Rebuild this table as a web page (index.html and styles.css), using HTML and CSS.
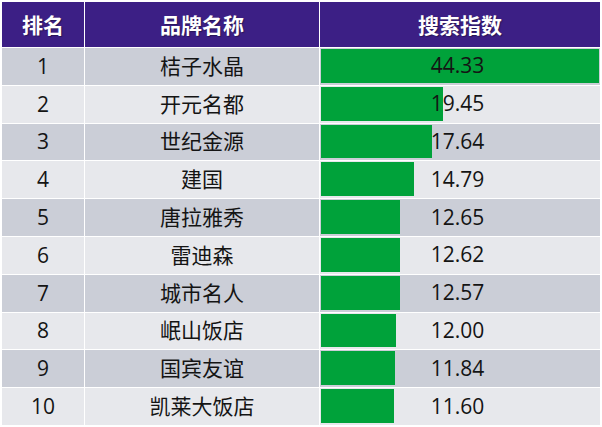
FILE: index.html
```html
<!DOCTYPE html>
<html lang="zh-CN">
<head>
<meta charset="utf-8">
<title>品牌搜索指数</title>
<link rel="stylesheet" href="styles.css">
</head>
<body>
<div class="board">
  <div class="head">排名</div>
  <div class="head">品牌名称</div>
  <div class="head">搜索指数</div>

  <div class="cell odd">1</div><div class="cell odd">桔子水晶</div>
  <div class="cell odd score"><div class="bar" style="width:278px"></div><span class="val">44.33</span></div>

  <div class="cell even">2</div><div class="cell even">开元名都</div>
  <div class="cell even score"><div class="bar" style="width:122px"></div><span class="val">19.45</span></div>

  <div class="cell odd">3</div><div class="cell odd">世纪金源</div>
  <div class="cell odd score"><div class="bar" style="width:110.6px"></div><span class="val">17.64</span></div>

  <div class="cell even">4</div><div class="cell even">建国</div>
  <div class="cell even score"><div class="bar" style="width:92.7px"></div><span class="val">14.79</span></div>

  <div class="cell odd">5</div><div class="cell odd">唐拉雅秀</div>
  <div class="cell odd score"><div class="bar" style="width:79.3px"></div><span class="val">12.65</span></div>

  <div class="cell even">6</div><div class="cell even">雷迪森</div>
  <div class="cell even score"><div class="bar" style="width:79.1px"></div><span class="val">12.62</span></div>

  <div class="cell odd">7</div><div class="cell odd">城市名人</div>
  <div class="cell odd score"><div class="bar" style="width:78.8px"></div><span class="val">12.57</span></div>

  <div class="cell even">8</div><div class="cell even">岷山饭店</div>
  <div class="cell even score"><div class="bar" style="width:75.3px"></div><span class="val">12.00</span></div>

  <div class="cell odd">9</div><div class="cell odd">国宾友谊</div>
  <div class="cell odd score"><div class="bar" style="width:74.2px"></div><span class="val">11.84</span></div>

  <div class="cell even">10</div><div class="cell even">凯莱大饭店</div>
  <div class="cell even score"><div class="bar" style="width:72.7px"></div><span class="val">11.60</span></div>
</div>
</body>
</html>
```
FILE: styles.css
```css
html, body {
  margin: 0;
  padding: 0;
  background: #ffffff;
}

body {
  font-family: "Open Sans", "Noto Sans CJK SC", sans-serif;
  font-size: 21px;
  color: #141414;
}

.board {
  display: grid;
  grid-template-columns: 82px 234px 280px;
  grid-template-rows: 45px repeat(10, 1fr);
  column-gap: 1px;
  row-gap: 1px;
  width: 598px;
  height: 423px;
  margin: 2px 0 0 2px;
}

.head {
  background: #3c1f85;
  color: #ffffff;
  font-weight: bold;
  font-family: "Noto Sans CJK SC", sans-serif;
  display: flex;
  align-items: center;
  justify-content: center;
  text-shadow: 1px 1px 1px rgba(0, 0, 0, 0.35);
  padding-bottom: 2px;
}

.cell {
  display: flex;
  align-items: center;
  justify-content: center;
  line-height: 1;
}

.odd {
  background: #cbced7;
}

.even {
  background: #e7e8ec;
}

.score {
  display: grid;
  grid-template: 1fr / 1fr;
  padding: 1px 0 2px 1px;
}

.bar {
  grid-area: 1 / 1;
  background: #00a23a;
  justify-self: start;
  align-self: stretch;
}

.val {
  grid-area: 1 / 1;
  align-self: center;
  justify-self: center;
  margin-left: -6px;
}
```
